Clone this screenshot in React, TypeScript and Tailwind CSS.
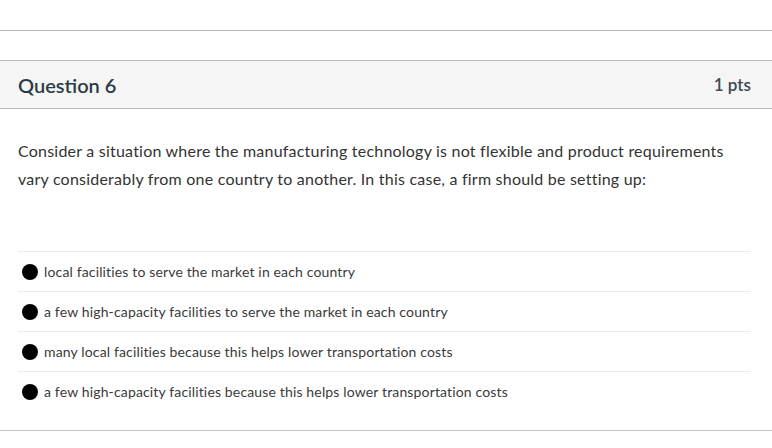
const options = [
  "local facilities to serve the market in each country",
  "a few high-capacity facilities to serve the market in each country",
  "many local facilities because this helps lower transportation costs",
  "a few high-capacity facilities because this helps lower transportation costs",
];

export default function App() {
  return (
    <div
      className="w-[772px] h-[448px] bg-white text-[#2d3b45] overflow-hidden"
      style={{ fontFamily: "Lato, 'Noto Sans', sans-serif" }}
    >
      {/* divider above the question */}
      <div className="h-[30px]" />
      <div className="h-px bg-[#b5b5b5]" />
      <div className="h-[29px]" />

      {/* Question card */}
      <div className="border-t border-b border-[#b9b9b9]">
        <div className="h-[47px] bg-[#f5f5f5] flex items-center justify-between pl-[18px] pr-[21px]">
          <span className="text-[20px] font-semibold">Question 6</span>
          <span className="text-[17px] font-semibold text-[#3d4a53]">1 pts</span>
        </div>
      </div>

      {/* Question body */}
      <div className="pl-[18px] pr-[20px] pt-[28px]">
        <p className="text-[16px] leading-[28px] tracking-[0.22px] text-[#333]">
          Consider a situation where the manufacturing technology is not flexible and product requirements
          vary considerably from one country to another. In this case, a firm should be setting up:
        </p>
      </div>

      {/* Answers */}
      <div className="mt-[58px] ml-[18px] w-[733px]">
        {options.map((opt) => (
          <div key={opt} className="h-[40px] border-t border-[#ececec] flex items-center">
            <span className="w-4 h-4 rounded-full bg-black ml-[4px] mr-[6px] shrink-0" />
            <span className="text-[14px] tracking-[0.15px] text-[#3a3a3a]">{opt}</span>
          </div>
        ))}
      </div>

      <div className="mt-[19px] h-px bg-[#c4c4c4]" />
    </div>
  );
}
